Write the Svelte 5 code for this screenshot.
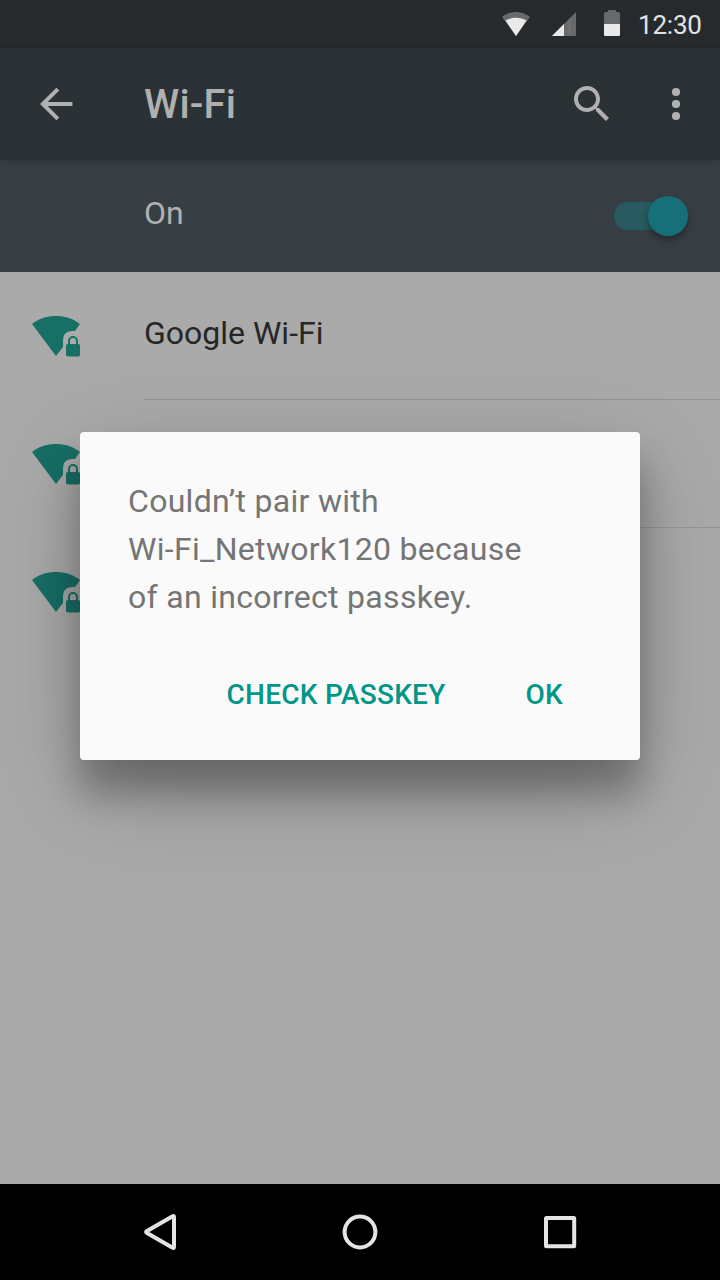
<script>
  const networks = [{ name: 'Google Wi-Fi' }, { name: '' }, { name: '' }];
</script>

<div class="screen">
  <div class="status">
    <svg width="28" height="24" viewBox="0 0 28 24">
      <path d="M0 5C8-1.7 20-1.7 28 5L14 24Z" fill="#67696b" />
      <path d="M3.5 8.6C10 4.8 18 4.8 24.5 8.6L14 24Z" fill="#e9e9e9" />
    </svg>
    <svg class="signal" width="24" height="24" viewBox="0 0 24 24">
      <path d="M0 24L24 0V24Z" fill="#67696b" />
      <path d="M0 24L12 12V24Z" fill="#e9e9e9" />
      <path d="M17.5 7V24" stroke="#747678" stroke-width="1" />
    </svg>
    <svg class="battery" width="16" height="26" viewBox="0 0 16 26">
      <path d="M4 0h8v2h2.5q1.5 0 1.500 1.500V14H0V3.500Q0 2 1.500 2H4Z" fill="#67696b" />
      <path d="M0 14H16V24.500Q16 26 14.500 26H1.500Q0 26 0 24.500Z" fill="#e9e9e9" />
    </svg>
    <span class="time">12:30</span>
  </div>

  <header class="toolbar">
    <svg width="48" height="48" viewBox="0 0 24 24" fill="#b0b0b0">
      <path d="M20.200 11H7.830l5.800-5.800L12.200 3.900 4 12l8.200 8.100 1.410-1.410L7.830 13H20.200v-2z" />
    </svg>
    <h1>Wi-Fi</h1>
    <svg width="48" height="48" viewBox="0 0 24 24" fill="#b0b0b0">
      <path d="M15.500 14h-.790l-.280-.270C15.410 12.590 16 11.110 16 9.500 16 5.910 13.090 3 9.500 3S3 5.910 3 9.500 5.910 16 9.500 16c1.610 0 3.090-.590 4.230-1.570l.270.280v.790l5 4.990L20.490 19l-4.990-5zm-6 0C7.010 14 5 11.990 5 9.500S7.010 5 9.500 5 14 7.010 14 9.500 11.990 14 9.500 14z" />
    </svg>
    <svg class="more" width="48" height="48" viewBox="0 0 24 24" fill="#b0b0b0">
      <circle cx="12" cy="6" r="2.050" /><circle cx="12" cy="12" r="2.050" /><circle cx="12" cy="18" r="2.050" />
    </svg>
  </header>

  <div class="master">
    <span>On</span>
    <div class="switch"><div class="thumb"></div></div>
  </div>

  <main>
    {#each networks as network}
      <div class="row">
        <svg width="48" height="41" viewBox="0 0 48 41" fill="#176f66">
          <path d="M0 8C13-2.700 35-2.700 48 8L43 15H40Q31 15.500 31 24V31L24 40Z" />
          <path d="M36 28V25a5 5 0 0 1 10 0V28H44V25a3 3 0 0 0-6 0V28Z" />
          <rect x="34" y="28" width="14" height="12.500" rx="1.800" />
        </svg>
        <div class="name">{network.name}</div>
      </div>
    {/each}
  </main>

  <nav>
    <svg width="48" height="48" viewBox="0 0 48 48">
      <path d="M10.600 23.300L36.600 8.300Q38 7.600 38 9V39Q38 40.400 36.600 39.700L10.600 24.700Q9.600 24 10.600 23.300Z" />
    </svg>
    <svg width="48" height="48" viewBox="0 0 48 48"><circle cx="24" cy="24" r="15.400" /></svg>
    <svg width="48" height="48" viewBox="0 0 48 48"><rect x="10" y="10" width="28.200" height="28.200" rx="0.500" /></svg>
  </nav>

  <div class="dialog" role="alertdialog">
    <p>Couldn’t pair with<br />Wi-Fi_Network120 because<br />of an incorrect passkey.</p>
    <div class="actions">
      <button>CHECK PASSKEY</button>
      <button>OK</button>
    </div>
  </div>
</div>

<style>
  :global(body) {
    margin: 0;
  }
  .screen {
    position: relative;
    display: flex;
    flex-direction: column;
    width: 720px;
    height: 1280px;
    overflow: hidden;
    background: #aaa;
    font-family: Roboto, sans-serif;
  }
  svg {
    display: block;
    flex: none;
  }
  .status {
    display: flex;
    align-items: flex-start;
    box-sizing: border-box;
    height: 48px;
    padding: 12px 18px 0 0;
    justify-content: flex-end;
    background: #262a2d;
  }
  .signal {
    margin-left: 22px;
  }
  .battery {
    margin: -2px 18px 0 28px;
  }
  .time {
    width: 64px;
    font-size: 26px;
    line-height: 26px;
    letter-spacing: -0.2px;
    color: #e3e3e3;
  }
  .toolbar {
    position: relative;
    z-index: 1;
    display: flex;
    align-items: center;
    box-sizing: border-box;
    height: 112px;
    padding: 0 20px 0 32px;
    background: #2b3236;
    box-shadow: 0 1px 7px rgba(0, 0, 0, 0.22);
  }
  h1 {
    flex: 1;
    margin: 2px 0 0 64px;
    font-size: 40px;
    line-height: 48px;
    font-weight: 500;
    letter-spacing: 0.2px;
    color: #b0b0b0;
  }
  .more {
    margin-left: 36px;
  }
  .master {
    display: flex;
    align-items: center;
    justify-content: space-between;
    box-sizing: border-box;
    height: 112px;
    padding: 0 32px 0 144px;
    background: #373f45;
    color: #b0b0b0;
    font-size: 32px;
  }
  .master span {
    margin-top: -6px;
  }
  .switch {
    display: flex;
    align-items: center;
    justify-content: flex-end;
    width: 74px;
    height: 28px;
    border-radius: 14px;
    background: #285a60;
  }
  .thumb {
    flex: none;
    width: 40px;
    height: 40px;
    border-radius: 50%;
    background: #176f79;
    box-shadow: 0 4px 7px rgba(0, 0, 0, 0.35);
  }
  main {
    flex: 1;
  }
  .row {
    display: flex;
    align-items: center;
    height: 128px;
    padding-left: 32px;
  }
  .name {
    flex: 1;
    box-sizing: border-box;
    height: 128px;
    margin-left: 64px;
    border-bottom: 1px solid #969696;
    font-size: 32px;
    line-height: 122px;
    color: #262626;
  }
  .row:last-child .name {
    border: 0;
  }
  nav {
    display: flex;
    justify-content: space-between;
    align-items: center;
    height: 96px;
    padding: 0 136px;
    background: #000;
  }
  nav svg {
    fill: none;
    stroke: #e4e4e4;
    stroke-width: 4;
    stroke-linejoin: round;
  }
  .dialog {
    position: absolute;
    z-index: 2;
    left: 80px;
    top: 432px;
    box-sizing: border-box;
    width: 560px;
    height: 328px;
    padding: 45px 48px 0;
    border-radius: 4px;
    background: #fafafa;
    box-shadow:
      0 32px 36px 0 rgba(0, 0, 0, 0.28),
      0 28px 100px rgba(0, 0, 0, 0.21);
  }
  p {
    margin: 0;
    font-size: 32px;
    line-height: 48px;
    letter-spacing: 0.3px;
    color: #757575;
  }
  .actions {
    display: flex;
    justify-content: flex-end;
    gap: 80px;
    margin: 57px 29px 0 0;
  }
  button {
    padding: 0;
    border: 0;
    background: none;
    font: 500 28px/34px Roboto, sans-serif;
    letter-spacing: 0.25px;
    color: #009688;
  }
</style>
